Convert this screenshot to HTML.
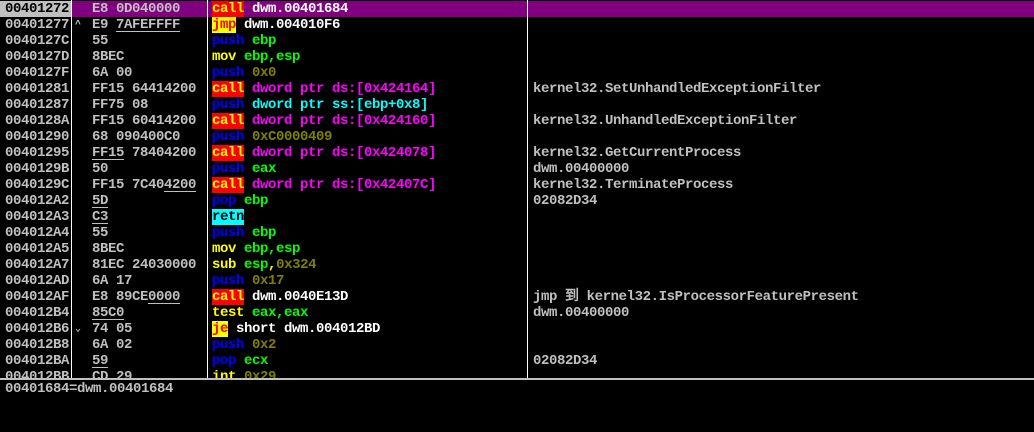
<!DOCTYPE html>
<html><head><meta charset="utf-8"><style>
*{margin:0;padding:0}
body{width:1034px;height:432px;background:#000;overflow:hidden;position:relative;font-family:"Liberation Mono","WenQuanYi Zen Hei",monospace;font-weight:bold;font-size:14px;letter-spacing:-0.4px;color:#c0c0c0}
.r{position:absolute;left:0;width:1034px;height:16px;line-height:17px;white-space:pre}
.r span{position:absolute;top:0}
.a{left:5px}.ar{left:75px;font-size:10px}.b{left:92px}.d{left:212px}.c{left:533px}
.v{position:absolute;top:0;width:1px;height:379px;background:#fff}
u{text-decoration:underline;text-underline-offset:3px}
.call{background:#f00;color:#ff0}.jmp{background:#ff0;color:#f00}.rt{background:#0ff;color:#000}
.bl{color:#00f}.g{color:#0f0}.y{color:#ff0}.o{color:#808000}.m{color:#f0f}.cy{color:#0ff}.w{color:#fff}
</style></head><body>
<div style="position:absolute;left:0;top:1px;width:72px;height:16px;background:#c0c0c0"></div>
<div style="position:absolute;left:72px;top:1px;width:962px;height:16px;background:#800080"></div>
<div class="v" style="left:71px"></div><div class="v" style="left:207px"></div><div class="v" style="left:527px"></div>

<div class="r" style="top:1px"><span class="a" style="color:#000">00401272</span><span class="b">E8 0D040000</span><span class="d"><b class="call">call</b> <b class="w">dwm.00401684</b></span></div>
<div class="r" style="top:17px"><span class="ar">^</span><span class="a">00401277</span><span class="b">E9 <u>7AFEFFFF</u></span><span class="d"><b class="jmp">jmp</b><b class="w"> dwm.004010F6</b></span></div>
<div class="r" style="top:33px"><span class="a">0040127C</span><span class="b">55</span><span class="d"><b class="bl">push</b> <b class="g">ebp</b></span></div>
<div class="r" style="top:49px"><span class="a">0040127D</span><span class="b">8BEC</span><span class="d"><b class="y">mov</b> <b class="g">ebp,esp</b></span></div>
<div class="r" style="top:65px"><span class="a">0040127F</span><span class="b">6A 00</span><span class="d"><b class="bl">push</b> <b class="o">0x0</b></span></div>
<div class="r" style="top:81px"><span class="a">00401281</span><span class="b">FF15 64414200</span><span class="d"><b class="call">call</b> <b class="m">dword ptr ds:[0x424164]</b></span><span class="c">kernel32.SetUnhandledExceptionFilter</span></div>
<div class="r" style="top:97px"><span class="a">00401287</span><span class="b">FF75 08</span><span class="d"><b class="bl">push</b> <b class="cy">dword ptr ss:[ebp+0x8]</b></span></div>
<div class="r" style="top:113px"><span class="a">0040128A</span><span class="b">FF15 60414200</span><span class="d"><b class="call">call</b> <b class="m">dword ptr ds:[0x424160]</b></span><span class="c">kernel32.UnhandledExceptionFilter</span></div>
<div class="r" style="top:129px"><span class="a">00401290</span><span class="b">68 090400C0</span><span class="d"><b class="bl">push</b> <b class="o">0xC0000409</b></span></div>
<div class="r" style="top:145px"><span class="a">00401295</span><span class="b"><u>FF15</u> 78404200</span><span class="d"><b class="call">call</b> <b class="m">dword ptr ds:[0x424078]</b></span><span class="c">kernel32.GetCurrentProcess</span></div>
<div class="r" style="top:161px"><span class="a">0040129B</span><span class="b">50</span><span class="d"><b class="bl">push</b> <b class="g">eax</b></span><span class="c">dwm.00400000</span></div>
<div class="r" style="top:177px"><span class="a">0040129C</span><span class="b">FF15 7C40<u>4200</u></span><span class="d"><b class="call">call</b> <b class="m">dword ptr ds:[0x42407C]</b></span><span class="c">kernel32.TerminateProcess</span></div>
<div class="r" style="top:193px"><span class="a">004012A2</span><span class="b"><u>5D</u></span><span class="d"><b class="bl">pop</b> <b class="g">ebp</b></span><span class="c">02082D34</span></div>
<div class="r" style="top:209px"><span class="a">004012A3</span><span class="b"><u>C3</u></span><span class="d"><b class="rt">retn</b></span></div>
<div class="r" style="top:225px"><span class="a">004012A4</span><span class="b">55</span><span class="d"><b class="bl">push</b> <b class="g">ebp</b></span></div>
<div class="r" style="top:241px"><span class="a">004012A5</span><span class="b">8BEC</span><span class="d"><b class="y">mov</b> <b class="g">ebp,esp</b></span></div>
<div class="r" style="top:257px"><span class="a">004012A7</span><span class="b">81EC 24030000</span><span class="d"><b class="y">sub</b> <b class="g">esp</b><b class="y">,</b><b class="o">0x324</b></span></div>
<div class="r" style="top:273px"><span class="a">004012AD</span><span class="b">6A 17</span><span class="d"><b class="bl">push</b> <b class="o">0x17</b></span></div>
<div class="r" style="top:289px"><span class="a">004012AF</span><span class="b">E8 89CE<u>0000</u></span><span class="d"><b class="call">call</b> <b class="w">dwm.0040E13D</b></span><span class="c">jmp 到 kernel32.IsProcessorFeaturePresent</span></div>
<div class="r" style="top:305px"><span class="a">004012B4</span><span class="b"><u>85C0</u></span><span class="d"><b class="y">test</b> <b class="g">eax,eax</b></span><span class="c">dwm.00400000</span></div>
<div class="r" style="top:321px"><span class="ar">&#8964;</span><span class="a">004012B6</span><span class="b">74 05</span><span class="d"><b class="jmp">je</b><b class="w"> short dwm.004012BD</b></span></div>
<div class="r" style="top:337px"><span class="a">004012B8</span><span class="b">6A 02</span><span class="d"><b class="bl">push</b> <b class="o">0x2</b></span></div>
<div class="r" style="top:353px"><span class="a">004012BA</span><span class="b"><u>59</u></span><span class="d"><b class="bl">pop</b> <b class="g">ecx</b></span><span class="c">02082D34</span></div>
<div class="r" style="top:369px;height:9px;overflow:hidden"><span class="a">004012BB</span><span class="b">CD 29</span><span class="d"><b class="y">int</b> <b class="o">0x29</b></span></div>
<div style="position:absolute;left:0;top:378px;width:1034px;height:2px;background:#c0c0c0"></div>
<div class="r" style="top:381px"><span class="a">00401684=dwm.00401684</span></div>
</body></html>
